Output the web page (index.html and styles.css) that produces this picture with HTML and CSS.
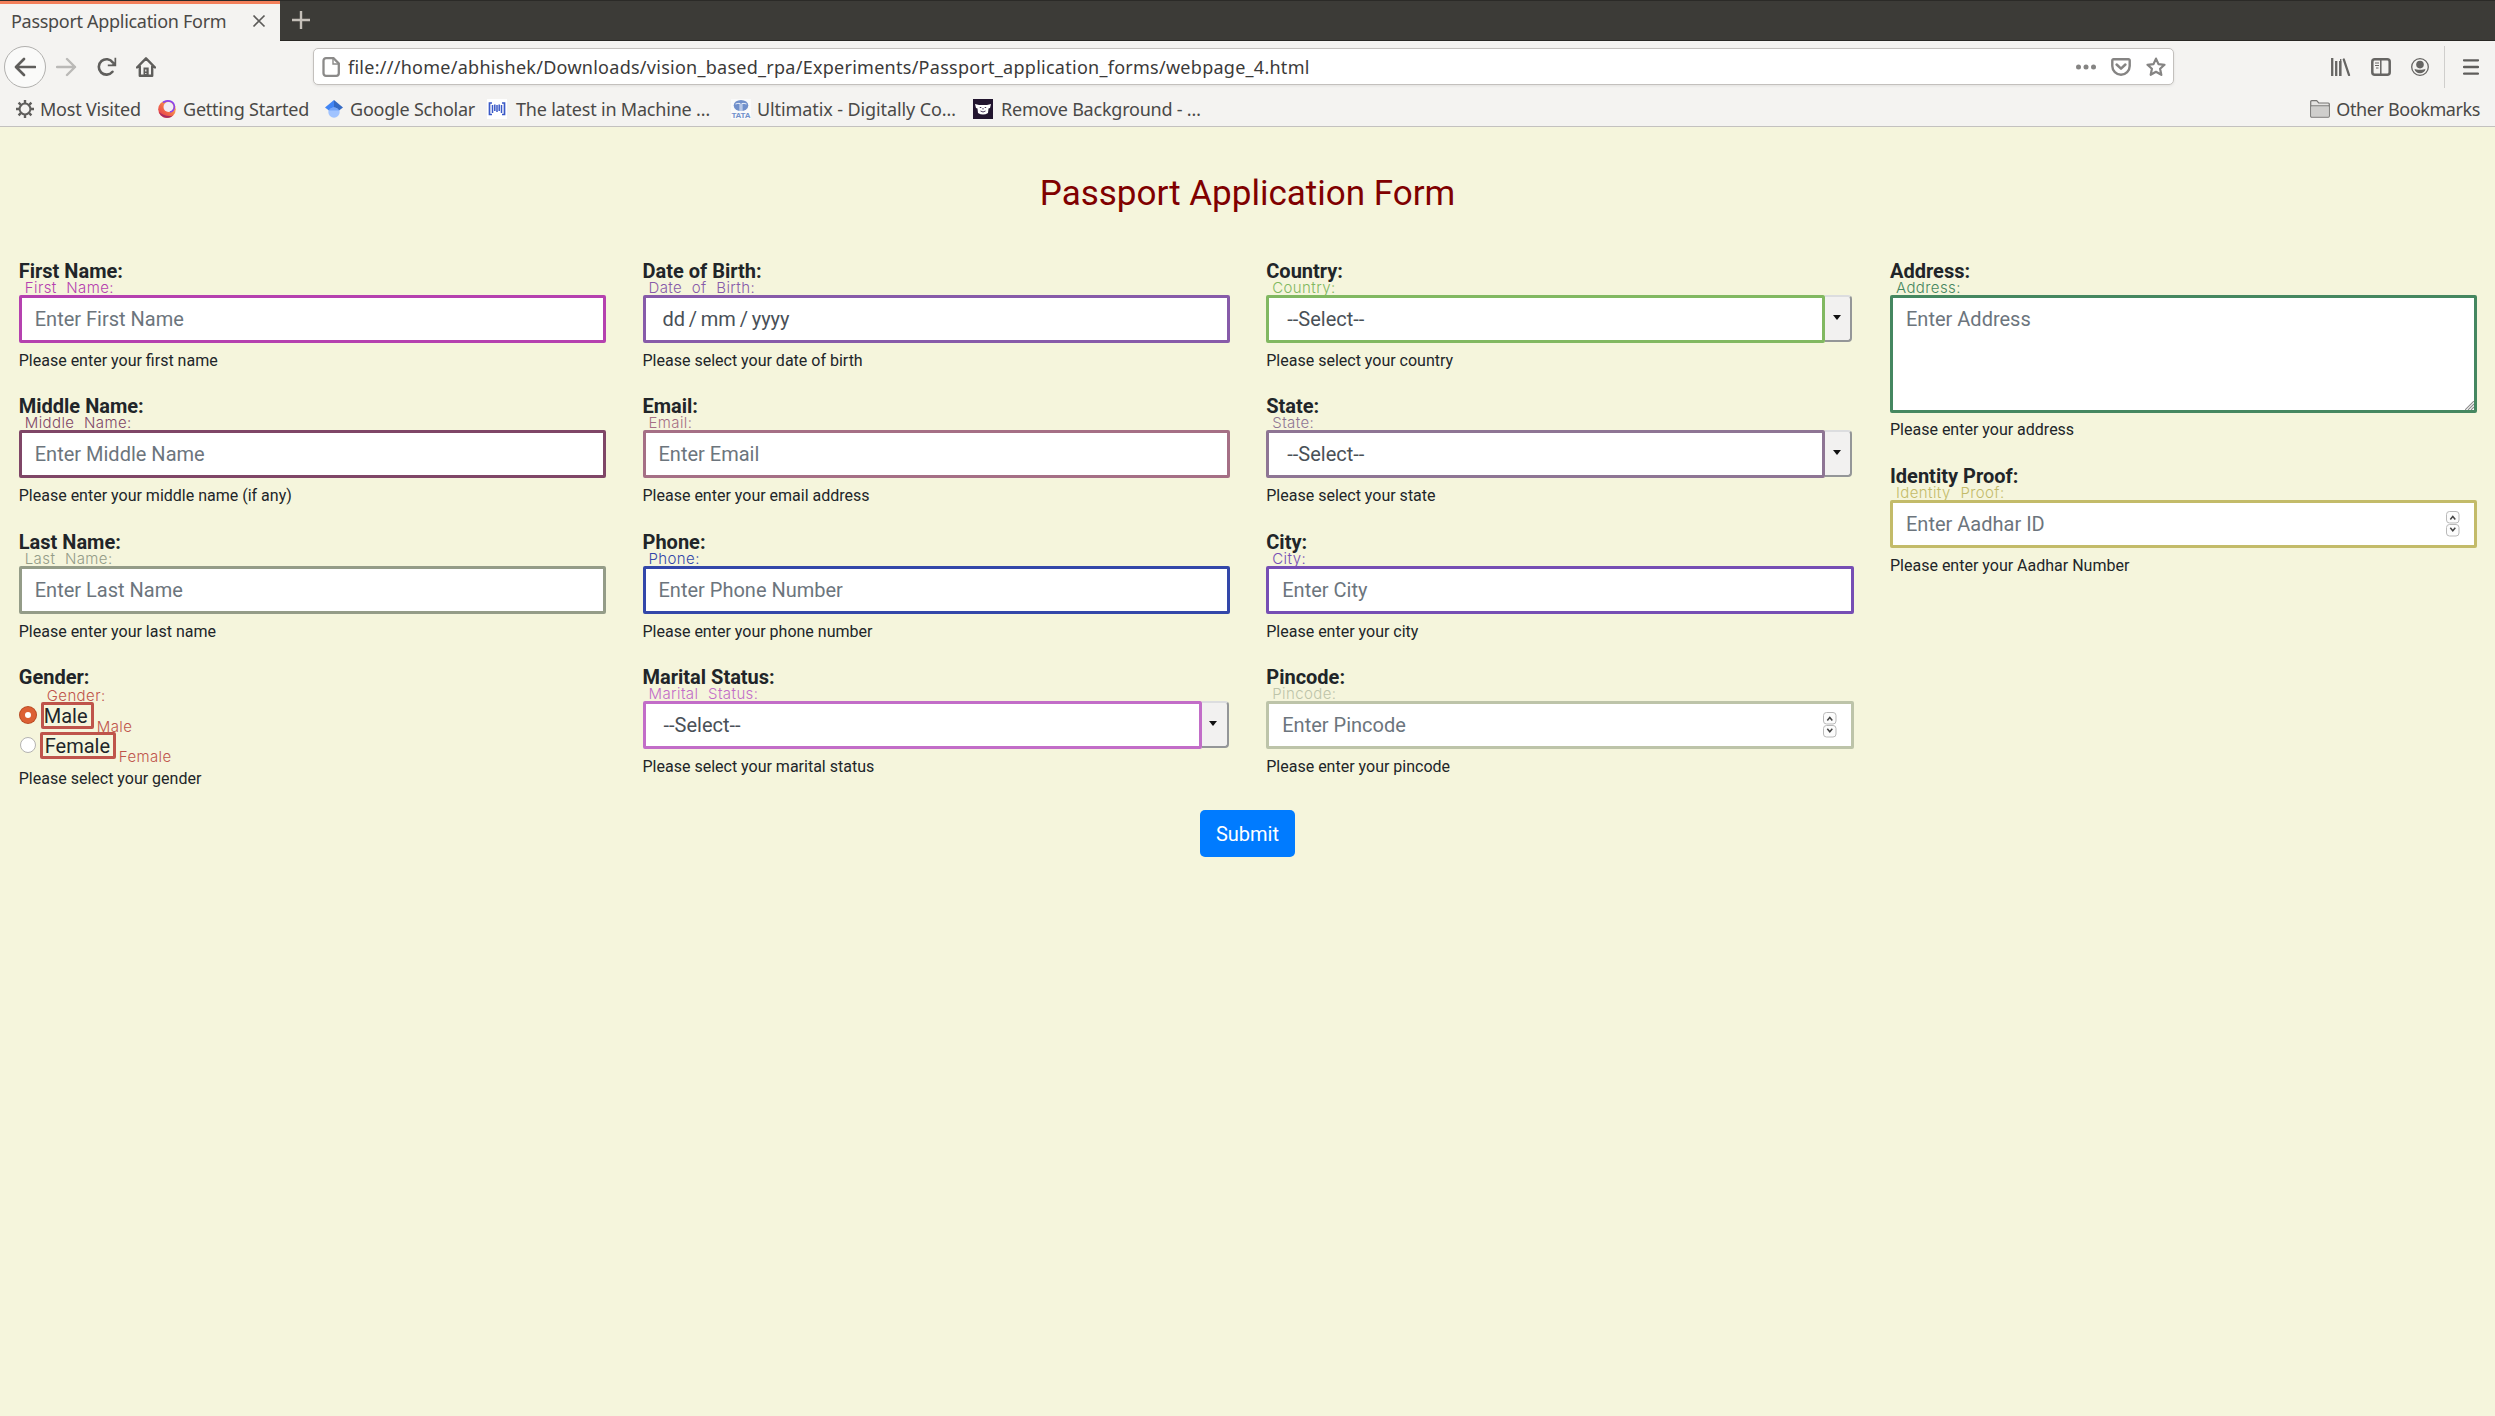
FILE: index.html
```html
<!DOCTYPE html>
<html lang="en">
<head>
<meta charset="utf-8">
<title>Passport Application Form</title>
<link rel="stylesheet" href="styles.css">
</head>
<body>
<header class="browser">
  <div class="tabs">
    <div class="tab"><span class="tab-title">Passport Application Form</span>
      <svg class="tab-close" width="14" height="14" viewBox="0 0 14 14"><path d="M1.5 1.5l11 11M12.500 1.500l-11 11" stroke="#5c5b59" stroke-width="1.7" fill="none"/></svg>
    </div>
    <svg class="new-tab" width="18" height="18" viewBox="0 0 18 18"><path d="M9 0v18M0 9h18" stroke="#c5c0b9" stroke-width="2.4"/></svg>
  </div>
  <div class="toolbar">
    <div class="nav">
      <span class="back"><svg width="22" height="20" viewBox="0 0 22 20"><path d="M21 10H2.500M10 2L2 10l8 8" fill="none" stroke="#5f5e5c" stroke-width="2.6" stroke-linecap="round" stroke-linejoin="round"/></svg></span>
      <svg class="forward" width="21" height="20" viewBox="0 0 21 20"><path d="M1 10h18M11 2l8 8-8 8" fill="none" stroke="#bab9b7" stroke-width="2.4" stroke-linecap="round" stroke-linejoin="round"/></svg>
      <svg class="reload" width="20" height="20" viewBox="0 0 20 20"><path d="M15.500 14.800A7.700 7.700 0 1 1 15.800 5.500" fill="none" stroke="#5f5e5c" stroke-width="2.6" stroke-linecap="round"/><path d="M19.200 .8v8.400h-8.400v-1.700h4.200l2.500-2.500V.8z" fill="#5f5e5c"/></svg>
      <svg class="home" width="20" height="20" viewBox="0 0 20 20"><path d="M1 10.500L10 1.300l9 9.200M3.800 9.500V18.700h12.400V9.500" fill="none" stroke="#5f5e5c" stroke-width="2.400" stroke-linejoin="round" stroke-linecap="round"/><path d="M7.500 10.500h5.200v8H7.500z" fill="#5f5e5c"/><path d="M9.800 12.500v2M9.800 16v1" stroke="#f4f3f1" stroke-width="1.200"/></svg>
    </div>
    <div class="urlbar">
      <svg width="18" height="20" viewBox="0 0 18 20"><path d="M4 1.200h7.500L16.800 6.500v9.800a2.500 2.500 0 0 1-2.500 2.500H4a2.500 2.500 0 0 1-2.500-2.500V3.700A2.500 2.500 0 0 1 4 1.200z" fill="none" stroke="#8b8a89" stroke-width="2.300"/><path d="M11 1.500V7h5.500" fill="none" stroke="#8b8a89" stroke-width="1.400"/></svg>
      <span class="url">file:///home/abhishek/Downloads/vision_based_rpa/Experiments/Passport_application_forms/webpage_4.html</span>
      <div class="url-actions">
        <svg width="20" height="6" viewBox="0 0 20 6"><g fill="#858483"><circle cx="2.500" cy="3" r="2.500"/><circle cx="10" cy="3" r="2.500"/><circle cx="17.500" cy="3" r="2.500"/></g></svg>
        <svg width="20" height="18" viewBox="0 0 20 18"><path d="M2.500 1.300h15a1.200 1.200 0 0 1 1.200 1.200V8a8.700 8.700 0 0 1-17.400 0V2.500a1.200 1.200 0 0 1 1.200-1.200z" fill="none" stroke="#858483" stroke-width="2.400"/><path d="M5.600 6.500L10 10.700l4.400-4.200" fill="none" stroke="#858483" stroke-width="2.500" stroke-linecap="round" stroke-linejoin="round"/></svg>
        <svg width="20" height="20" viewBox="0 0 20 20"><path d="M10 1.600l2.500 5.500 6 .7-4.400 4 1.200 6-5.300-3-5.300 3 1.200-6-4.400-4 6-.7z" fill="none" stroke="#858483" stroke-width="2.200" stroke-linejoin="round"/></svg>
      </div>
    </div>
    <div class="tools">
      <svg width="20" height="18" viewBox="0 0 20 18"><path d="M1.200 0v18M5.200 3v15M9.200 3v15" stroke="#666563" stroke-width="2.300"/><path d="M9.700 1v17" stroke="#666563" stroke-width="1.300"/><path d="M12.800 1.500L18 17" stroke="#666563" stroke-width="2.300" stroke-linecap="round"/></svg>
      <svg width="20" height="18" viewBox="0 0 20 18"><rect x="1.300" y="1.300" width="17.400" height="15.400" rx="2.500" fill="none" stroke="#666563" stroke-width="2.500"/><path d="M9.800 1v16" stroke="#666563" stroke-width="1.500"/><path d="M4 5h4M4 7.500h4M5 10h2.500" stroke="#666563" stroke-width="1.200"/></svg>
      <svg width="18" height="18" viewBox="0 0 18 18"><circle cx="9" cy="9" r="8.300" fill="none" stroke="#666563" stroke-width="1.300"/><circle cx="9" cy="6.600" r="3.800" fill="#666563"/><path d="M3.500 10.700c2 1.300 9 1.300 11 0-.3 2.900-2.700 4.500-5.500 4.500s-5.200-1.600-5.500-4.500z" fill="#666563"/></svg>
      <i class="divider"></i>
      <svg width="16" height="16" viewBox="0 0 16 16"><path d="M1 1.300h14M1 8h14M1 14.600h14" stroke="#5f5e5c" stroke-width="2.300" stroke-linecap="round"/></svg>
    </div>
  </div>
  <div class="bookmarks">
    <span class="bm visited"><svg width="18" height="18" viewBox="0 0 18 18"><circle cx="9" cy="9" r="5.400" fill="none" stroke="#5f5e5c" stroke-width="2"/><path d="M9 0v3M9 15v3M0 9h3M15 9h3M2.600 2.600l2.200 2.200M13.200 13.200l2.200 2.200M2.600 15.400l2.200-2.200M13.200 4.800l2.200-2.200" stroke="#5f5e5c" stroke-width="2.400"/></svg>Most Visited</span>
    <span class="bm started"><svg width="18" height="18" viewBox="0 0 18 18"><defs><linearGradient id="fox" x1="0" y1="1" x2=".9" y2="0"><stop offset="0" stop-color="#e3304d"/><stop offset=".5" stop-color="#f2704a"/><stop offset="1" stop-color="#ffd45c"/></linearGradient></defs><circle cx="9" cy="9.200" r="8.800" fill="url(#fox)"/><path d="M1 12a8.700 8.700 0 0 0 14 3.500C10 17 4 15 1 12z" fill="#a52b63"/><circle cx="10.500" cy="7" r="5" fill="#f1edf5"/><path d="M5 2.500C9-.6 15.500.8 16.300 6c.4 3-1.600 5.700-4.300 6" fill="none" stroke="#8b42ee" stroke-width="1.600"/></svg>Getting Started</span>
    <span class="bm scholar"><svg width="18" height="18" viewBox="0 0 18 18"><circle cx="9" cy="12" r="5.700" fill="#a0c3ff"/><path d="M9 0L0 7.400l4 3.200a5.700 5.700 0 0 1 5-3.200z" fill="#4285f4"/><path d="M9 0l9 7.400-4 3.200a5.700 5.700 0 0 0-5-3.200z" fill="#356ac3"/><path d="M4 10.500a5.700 5.700 0 0 1 10 0z" fill="#76a7fa"/></svg>Google Scholar</span>
    <span class="bm machine"><svg width="20" height="20" viewBox="0 0 20 20"><path fill="#fff" d="M0 0h20v20H0z"/><path d="M5 4H2.500v11.500H5M15 4h2.500v11.500H15" fill="none" stroke="#3a59c7" stroke-width="1.700"/><path d="M5.500 6v8M7.800 5.500v6.500M10 6v7M12.200 5.500v6.500M14.500 6v8" stroke="#3a59c7" stroke-width="1.500"/></svg>The latest in Machine …</span>
    <span class="bm tata"><svg width="20" height="20" viewBox="0 0 20 20"><path fill="#fafafa" d="M0 0h20v20H0z"/><ellipse cx="10" cy="6.500" rx="7.300" ry="5.500" fill="#7190cb"/><path d="M9.100 12V4.500Q7 4 4.500 5M10.900 12V4.500Q13 4 15.500 5" fill="none" stroke="#e9effb" stroke-width="1"/><text x="0.500" y="18.800" textLength="19" class="tata-word">TATA</text></svg>Ultimatix - Digitally Co…</span>
    <span class="bm remove"><svg width="20" height="20" viewBox="0 0 20 20"><path fill="#22152f" d="M0 0h20v20H0z"/><path d="M2 5l4 1h8l4-1-1 4-1.500.5-.5 4.500q-5 3-10 0L4.500 9.500 3 9z" fill="#fff"/><path d="M6.800 8.500h1.500M11.700 8.500h1.500M7.500 12q2.500 2 5 0M10 9v1.500" stroke="#49395a" fill="none"/></svg>Remove Background - …</span>
    <span class="bm other"><svg width="20" height="18" viewBox="0 0 20 18"><path d="M.7 16V1.700q0-1 1-1h5l2 2.300h9.600q1 0 1 1V16q0 1.200-1 1.200H1.700q-1 0-1-1.200z" fill="#e4e3e1" stroke="#777674" stroke-width="1.200"/><path d="M1.300 6.500h17.400v10H1.300z" fill="#cfcecc"/><path d="M1 5.800h18" stroke="#777674"/></svg>Other Bookmarks</span>
  </div>
</header>
<main class="page">
  <h1 class="title">Passport Application Form</h1>
  <form class="columns">
    <div class="column">
      <div class="group first"><label class="label">First Name:</label><span class="tag">First Name:</span><div class="control">Enter First Name</div><small class="help">Please enter your first name</small></div>
      <div class="group middle"><label class="label">Middle Name:</label><span class="tag">Middle Name:</span><div class="control">Enter Middle Name</div><small class="help">Please enter your middle name (if any)</small></div>
      <div class="group last"><label class="label">Last Name:</label><span class="tag">Last Name:</span><div class="control">Enter Last Name</div><small class="help">Please enter your last name</small></div>
      <div class="group gender"><label class="label">Gender:</label><span class="tag">Gender:</span>
        <div class="choice"><i class="radio checked"></i><span class="option male">Male</span><span class="option-tag">Male</span></div>
        <div class="choice"><i class="radio"></i><span class="option female">Female</span><span class="option-tag">Female</span></div>
        <small class="help">Please select your gender</small></div>
    </div>
    <div class="column">
      <div class="group birth"><label class="label">Date of Birth:</label><span class="tag">Date of Birth:</span><div class="control date">dd / mm / yyyy</div><small class="help">Please select your date of birth</small></div>
      <div class="group email"><label class="label">Email:</label><span class="tag">Email:</span><div class="control">Enter Email</div><small class="help">Please enter your email address</small></div>
      <div class="group phone"><label class="label">Phone:</label><span class="tag">Phone:</span><div class="control">Enter Phone Number</div><small class="help">Please enter your phone number</small></div>
      <div class="group marital"><label class="label">Marital Status:</label><span class="tag">Marital Status:</span><div class="select"><div class="control value">--Select--</div><span class="drop"></span></div><small class="help">Please select your marital status</small></div>
    </div>
    <div class="column">
      <div class="group country"><label class="label">Country:</label><span class="tag">Country:</span><div class="select"><div class="control value">--Select--</div><span class="drop"></span></div><small class="help">Please select your country</small></div>
      <div class="group state"><label class="label">State:</label><span class="tag">State:</span><div class="select"><div class="control value">--Select--</div><span class="drop"></span></div><small class="help">Please select your state</small></div>
      <div class="group city"><label class="label">City:</label><span class="tag">City:</span><div class="control">Enter City</div><small class="help">Please enter your city</small></div>
      <div class="group pincode"><label class="label">Pincode:</label><span class="tag">Pincode:</span><div class="control number">Enter Pincode
        <svg width="14" height="26" viewBox="0 0 14 26"><g fill="#fcfcfc" stroke="#b9b9b9"><rect x=".5" y=".5" width="12.500" height="11.500" rx="3"/><rect x=".5" y="13.500" width="12.500" height="11.500" rx="3"/></g><path d="M4.300 8.500L6.800 5.500l2.500 3M4.300 16.800l2.500 3 2.500-3" fill="none" stroke="#444" stroke-width="1.500"/></svg></div><small class="help">Please enter your pincode</small></div>
    </div>
    <div class="column">
      <div class="group address"><label class="label">Address:</label><span class="tag">Address:</span><div class="control area">Enter Address
        <svg width="9" height="9" viewBox="0 0 9 9"><path d="M0 9l9-9M3 9l6-6M6 9l3-3" stroke="#8c8c8c" stroke-width="1.100"/></svg></div><small class="help">Please enter your address</small></div>
      <div class="group identity"><label class="label">Identity Proof:</label><span class="tag">Identity Proof:</span><div class="control number">Enter Aadhar ID
        <svg width="14" height="26" viewBox="0 0 14 26"><g fill="#fcfcfc" stroke="#b9b9b9"><rect x=".5" y=".5" width="12.500" height="11.500" rx="3"/><rect x=".5" y="13.500" width="12.500" height="11.500" rx="3"/></g><path d="M4.300 8.500L6.800 5.500l2.500 3M4.300 16.800l2.500 3 2.500-3" fill="none" stroke="#444" stroke-width="1.500"/></svg></div><small class="help">Please enter your Aadhar Number</small></div>
    </div>
  </form>
  <button class="submit" type="button">Submit</button>
</main>
</body>
</html>
```
FILE: styles.css
```css
* { box-sizing: border-box; }
body { margin: 0; height: 1416px; overflow: hidden; background: #f5f5dc; color: #212529; font: 20px/30px Roboto, sans-serif; }
svg { display: block; flex: none; }

/* Browser window */
.browser { height: 127px; background: #f4f3f1; border-bottom: 1px solid #c3c1bf; color: #4a4947; font: 18px/24px "Noto Sans", sans-serif; }
.tabs { display: flex; height: 41px; background: #3c3b37; border-top: 1px solid #2b2a27; border-bottom: 1px solid #282724; }
.tab { display: flex; align-items: center; width: 280px; height: 40px; padding: 0 14px 3px 11px; background: #f4f3f1; border-top: 3px solid #f37f5a; justify-content: space-between; }
.tab-title { white-space: nowrap; letter-spacing: -0.3px; }
.new-tab { margin: 10px 0 0 12px; }
.toolbar { display: flex; height: 51px; align-items: center; padding: 0 16px 0 4px; justify-content: space-between; }
.nav { display: flex; align-items: center; width: 309px; }
.back { display: grid; place-items: center; width: 42px; height: 42px; border: 1px solid #b1b0ae; border-radius: 50%; background: #fafaf9; }
.forward { margin-left: 10px; }
.reload { margin-left: 20px; }
.home { margin-left: 19px; }
.urlbar { display: flex; align-items: center; width: 1861px; height: 37px; padding: 0 7px 0 8px; background: #fff; border: 1px solid #c3c0bd; border-radius: 5px; box-shadow: 0 1px 3px rgba(0,0,0,.08); }
.url { margin-left: 8px; color: #3b3a39; white-space: nowrap; letter-spacing: 0.265px; }
.url-actions { display: flex; align-items: center; gap: 15px; margin-left: auto; }
.tools { display: flex; align-items: center; margin-left: auto; gap: 20px; }
.divider { width: 1px; height: 42px; background: #cfcecc; margin: 0 -2px 0 -5px; }
.bookmarks { display: flex; align-items: center; height: 34px; padding: 0 15px 0 16px; }
.bm { display: flex; align-items: center; gap: 7px; white-space: nowrap; letter-spacing: -0.22px; }
.visited { width: 142px; gap: 6px; }
.started { width: 167px; }
.scholar { width: 162px; }
.machine { width: 244px; gap: 9px; letter-spacing: -0.2px; }
.tata { width: 242px; gap: 6px; letter-spacing: -0.1px; }
.remove { gap: 8px; }
.other { margin-left: auto; gap: 6px; letter-spacing: -0.4px; }
.tata-word { font: bold 8px "Liberation Sans", sans-serif; fill: #7190cb; letter-spacing: 0; }

/* Form */
.page { display: flex; flex-direction: column; align-items: center; }
.title { margin: 46px 0 0; font-size: 35px; line-height: 42px; font-weight: 400; color: #800000; }
.columns { display: grid; grid-template-columns: repeat(4, 586.25px); gap: 37.5px; margin-top: 41px; height: 554px; }
.group { position: relative; height: 135px; color: var(--mark); }
.label { display: block; height: 39px; color: #212529; font-weight: 700; }
.tag { position: absolute; left: 6px; top: 23px; }
.tag, .option-tag { font: 300 15px/18px Inter, Roboto, sans-serif; letter-spacing: 0.4px; word-spacing: 5px; white-space: nowrap; }
.control { display: flex; align-items: center; width: 587px; height: 48px; padding: 0 13px; background: #fff; border: 3px solid var(--mark); border-radius: 2px; color: #6c757d; }
.control.date { padding-left: 17px; color: #495057; word-spacing: -1.2px; }
.control.value { width: 559px; padding-left: 18px; color: #495057; }
.control.number { justify-content: space-between; padding-right: 14px; }
.control.area { height: 118px; padding: 6px 0 0 13px; align-items: flex-start; justify-content: space-between; }
.area svg { align-self: flex-end; }
.select { display: flex; }
.drop { display: grid; place-items: center; width: 27px; height: 47px; padding: 0 2px 2px 0; background: #f2f1f0; border: solid #949698; border-width: 2px 2px 2px 0; border-top-color: #dcdddf; border-radius: 0 4px 4px 0; }
.drop::before { content: ""; border: solid transparent; border-width: 5px 4px 0; border-top-color: #111; }
.help { display: block; margin-top: 6px; color: #212529; font-size: 16px; line-height: 24px; }
.last, .middle, .email, .state { height: 136px; }
.last, .phone, .city { height: 135px; }
.city .control, .pincode .control { width: 588px; }
.choice { display: flex; align-items: center; height: 30px; }
.gender .label { height: 38px; }
.gender .tag { left: 28px; top: 26px; line-height: 16px; }
.radio { width: 16px; height: 16px; margin-left: 1px; background: #fff; border: 1px solid #b4b3b1; border-radius: 50%; }
.radio.checked { border: 5px solid #dc6034; box-shadow: 0 0 0 1px #b84a22; }
.option { height: 27px; border: 3px solid var(--mark); border-radius: 2px; color: #212529; line-height: 23px; }
.male { width: 53px; margin-left: 5px; }
.female { width: 76px; margin-left: 4px; padding-left: 2px; }
.option-tag { margin: 24px 0 0 3px; }
.gender .help { margin-top: 7px; }
.submit { width: 95px; height: 47px; padding: 0; border: 0; border-radius: 5px; background: #007bff; color: #fff; font: 20px/30px Roboto, sans-serif; }
.group.address { height: 205px; }
.address .help { margin-top: 5px; }

.first { --mark: #b541af; }
.middle { --mark: #7f4667; }
.last { --mark: #949c88; }
.gender { --mark: #bf544b; }
.birth { --mark: #875ba9; }
.email { --mark: #a56f85; }
.phone { --mark: #3347a9; }
.marital { --mark: #c26dc8; }
.country { --mark: #81b861; }
.state { --mark: #8e7594; }
.city { --mark: #764eb4; }
.pincode { --mark: #bdc4a9; }
.address { --mark: #458760; }
.identity { --mark: #c3bb69; }
```
